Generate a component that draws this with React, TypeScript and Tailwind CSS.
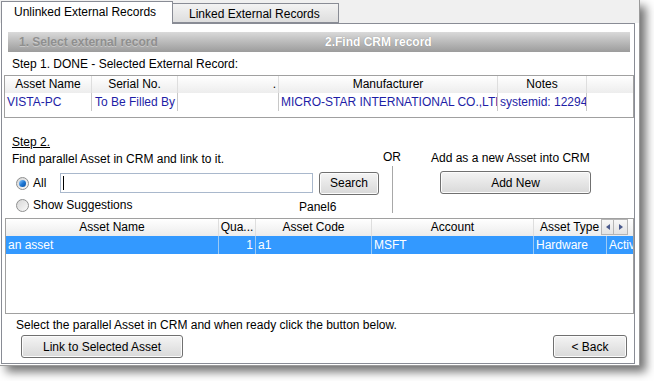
import React from 'react';

const font = { fontFamily: '"Liberation Sans", Arial, sans-serif' };

const Btn: React.FC<{ label: string; className?: string }> = ({ label, className = '' }) => (
  <button
    className={`h-[23px] rounded-[3px] border border-[#707070] bg-gradient-to-b from-[#f4f4f4] to-[#d9d9d9] text-[12px] leading-none text-black shadow-[inset_0_0_0_1px_#fcfcfc] ${className}`}
  >
    {label}
  </button>
);

const Radio: React.FC<{ checked?: boolean }> = ({ checked }) => (
  <span className="flex h-[13px] w-[13px] items-center justify-center rounded-full border border-[#8e8f8f] bg-gradient-to-br from-[#d6d6d6] to-[#fafafa]">
    {checked && (
      <span className="h-[7px] w-[7px] rounded-full bg-gradient-to-br from-[#8fd0ff] via-[#1f79d6] to-[#0b4fa0]" />
    )}
  </span>
);

const HCell: React.FC<{ w: string; label: string; last?: boolean }> = ({ w, label, last }) => (
  <div
    className={`${w} shrink-0 overflow-hidden whitespace-nowrap text-center leading-[17px] ${last ? '' : 'border-r border-[#dedede]'}`}
  >
    {label}
  </div>
);

export default function App() {
  return (
    <div className="h-[381px] w-[654px] overflow-hidden bg-white text-[12px] text-black" style={font}>
      <div className="flex h-[366px] w-[640px] flex-col border-b border-r border-[#9a9a9a] bg-white shadow-[6px_6px_9px_rgba(0,0,0,0.55)]">
        {/* tabs */}
        <div className="flex h-[23px] shrink-0 items-end bg-[#f0f0f0]">
          <div className="relative z-10 -mb-px ml-px h-[23px] w-[172px] border border-b-0 border-[#898c95] bg-white pl-[12px] pt-[3px] leading-[14px]">
            Unlinked External Records
          </div>
          <div className="h-[20px] w-[166px] border border-l-0 border-[#898c95] bg-gradient-to-b from-[#f3f3f3] to-[#dedede] pl-[16px] pt-[3px] leading-[14px]">
            Linked External Records
          </div>
        </div>

        {/* tab page */}
        <div className="ml-px flex h-[341px] w-[634px] flex-col border border-[#898c95] bg-white">
          <div className="ml-[6px] mr-[4px] mt-[8px] flex h-[20px] items-center bg-gradient-to-b from-[#dadada] via-[#bababa] to-[#9c9c9c] font-bold">
            <span className="w-[317px] pl-[11px] text-[#8f8f8f] [text-shadow:0_1px_0_rgba(255,255,255,0.35)]">1. Select external record</span>
            <span className="text-white [text-shadow:0_0_1px_rgba(0,0,0,0.3)]">2.Find CRM record</span>
          </div>

          <div className="mt-[5px] h-[14px] pl-[10px] leading-[14px]">Step 1. DONE - Selected External Record:</div>

          {/* external record table */}
          <div className="ml-[2px] mt-[4px] h-[43px] w-[630px] border border-[#a0a0a0]">
            <div className="flex h-[17px] bg-gradient-to-b from-[#ffffff] to-[#ededed]">
              <HCell w="w-[87px]" label="Asset Name" />
              <HCell w="w-[86px]" label="Serial No." />
              <div className="w-[101px] shrink-0 border-r border-[#dedede] pr-[2px] text-right leading-[17px]">.</div>
              <HCell w="w-[219px]" label="Manufacturer" />
              <HCell w="w-[89px]" label="Notes" />
            </div>
            <div className="flex h-[18px] items-center whitespace-nowrap leading-[18px] text-[#1e1ea6]">
              <div className="w-[87px] shrink-0 overflow-hidden border-r border-[#c8c8c8] pl-[2px]">VISTA-PC</div>
              <div className="w-[86px] shrink-0 overflow-hidden border-r border-[#c8c8c8] pl-[3px]">To Be Filled By</div>
              <div className="w-[101px] shrink-0 border-r border-[#c8c8c8]">&nbsp;</div>
              <div className="w-[219px] shrink-0 overflow-hidden border-r border-[#c8c8c8] pl-[2px]">MICRO-STAR INTERNATIONAL CO.,LTD</div>
              <div className="w-[89px] shrink-0 overflow-hidden border-r border-[#c8c8c8] pl-[2px]">systemid: 12294</div>
            </div>
          </div>

          {/* step 2 */}
          <div className="mt-[17px] flex h-[81px]">
            <div className="w-[381px] shrink-0">
              <div className="h-[14px] pl-[10px] leading-[14px] underline">Step 2.</div>
              <div className="mt-[3px] h-[14px] pl-[10px] leading-[14px]">Find parallel Asset in CRM and link to it.</div>
              <div className="mt-[6px] flex h-[22px] items-center">
                <span className="ml-[14px]">
                  <Radio checked />
                </span>
                <span className="ml-[4px] w-[27px]">All</span>
                <div className="flex h-[20px] w-[253px] items-center border border-[#a9b8cc] bg-white pl-[2px]">
                  <span className="h-[14px] w-px bg-black" />
                </div>
                <Btn label="Search" className="ml-[6px] w-[60px]" />
              </div>
              <div className="flex h-[22px] items-center">
                <span className="ml-[14px]">
                  <Radio />
                </span>
                <span className="ml-[4px] w-[266px]">Show Suggestions</span>
                <span className="mt-[4px]">Panel6</span>
              </div>
            </div>

            <div className="w-[24px] shrink-0">
              <div className="mt-[15px] h-[14px] leading-[14px]">OR</div>
              <div className="ml-[9px] mt-[2px] h-[47px] w-px bg-[#a8a8a8]" />
            </div>

            <div className="flex-1">
              <div className="ml-[24px] mt-[16px] h-[14px] leading-[14px]">Add as a new Asset into CRM</div>
              <Btn label="Add New" className="ml-[33px] mt-[6px] w-[151px]" />
            </div>
          </div>

          {/* CRM table */}
          <div className="ml-[3px] mt-[2px] h-[96px] w-[629px] overflow-hidden border border-[#a0a0a0]">
            <div className="flex h-[17px] bg-gradient-to-b from-[#ffffff] to-[#ececec]">
              <HCell w="w-[213px]" label="Asset Name" />
              <HCell w="w-[37px]" label="Qua..." />
              <HCell w="w-[116px]" label="Asset Code" />
              <HCell w="w-[162px]" label="Account" />
              <div className="w-[67px] shrink-0 overflow-hidden whitespace-nowrap pl-[6px] leading-[17px]">Asset Type</div>
              <div className="flex h-[16px] w-[13px] shrink-0 items-center justify-center border border-[#b5b5b5] bg-gradient-to-b from-[#f7f7f7] to-[#e3e3e3]">
                <svg width="4" height="6" viewBox="0 0 4 6">
                  <path d="M4 0 L0 3 L4 6 Z" fill="#4a5a8c" />
                </svg>
              </div>
              <div className="flex h-[16px] w-[14px] shrink-0 items-center justify-center border border-l-0 border-[#b5b5b5] bg-gradient-to-b from-[#f7f7f7] to-[#e3e3e3]">
                <svg width="4" height="6" viewBox="0 0 4 6">
                  <path d="M0 0 L4 3 L0 6 Z" fill="#4a5a8c" />
                </svg>
              </div>
            </div>
            <div className="flex h-[18px] whitespace-nowrap bg-[#3399ff] leading-[18px] text-white">
              <div className="w-[213px] shrink-0 border-r border-[#9ccaf5] pl-[2px]">an asset</div>
              <div className="w-[37px] shrink-0 border-r border-[#9ccaf5] pr-[2px] text-right">1</div>
              <div className="w-[116px] shrink-0 border-r border-[#9ccaf5] pl-[2px]">a1</div>
              <div className="w-[162px] shrink-0 border-r border-[#9ccaf5] pl-[2px]">MSFT</div>
              <div className="w-[73px] shrink-0 border-r border-[#9ccaf5] pl-[2px]">Hardware</div>
              <div className="overflow-hidden pl-[2px]">Active</div>
            </div>
          </div>

          <div className="mt-[4px] h-[14px] pl-[14px] leading-[14px]">
            Select the parallel Asset in CRM and when ready click the button below.
          </div>
          <div className="mt-[3px] flex justify-between">
            <Btn label="Link to Selected Asset" className="ml-[19px] w-[162px]" />
            <Btn label="< Back" className="mr-[7px] w-[74px]" />
          </div>
        </div>
      </div>
    </div>
  );
}
